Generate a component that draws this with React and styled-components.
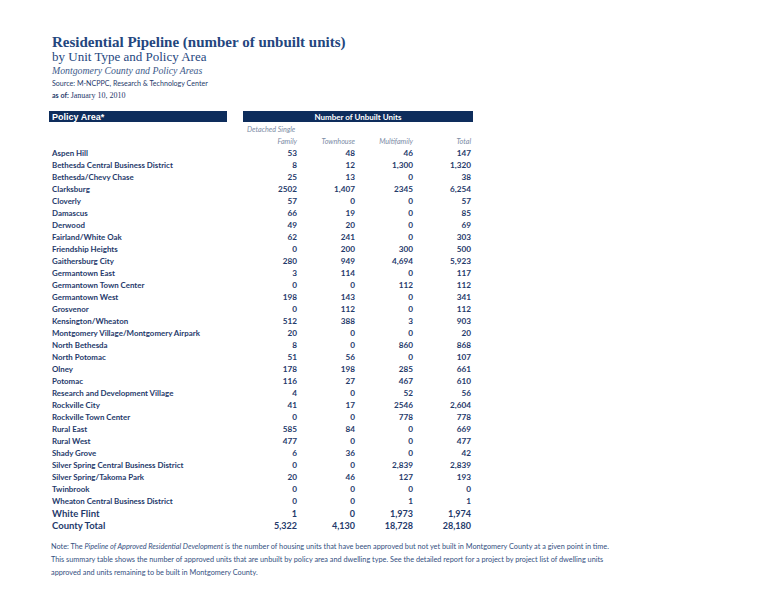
import React from 'react';
import styled, { createGlobalStyle } from 'styled-components';

const navy = '#0e2d5c';
const ink = '#1f3a6b';
const muted = '#7b8ba5';

const GlobalStyle = createGlobalStyle`
body {
    margin: 0;
    background: #ffffff;
}
`

const Page = styled.div`
width: 768px;
height: 594px;
padding: 34px 0 0 49px;
box-sizing: border-box;
color: ${ink};
`

const Title = styled.h1`
margin: 0;
padding-left: 3px;
font-family: "Liberation Serif", serif;
font-weight: 700;
font-size: 15px;
line-height: 16px;
color: #24467e;
`

const Subtitle = styled.h2`
margin: 0;
padding-left: 3px;
font-family: "Liberation Serif", serif;
font-weight: 400;
font-size: 13px;
line-height: 14px;
color: #24467e;
`

const Region = styled.div`
padding-left: 3px;
font-family: "Liberation Serif", serif;
font-style: italic;
font-size: 9.8px;
line-height: 13px;
color: #3d5a8a;
`

const Meta = styled.div`
padding-left: 3px;
font-family: "Lato", sans-serif;
font-size: 7.1px;
line-height: ${props => props.tall ? '13px' : '12px'};
color: ${ink};
b {
    font-weight: 700;
}
span {
    font-family: "Liberation Serif", serif;
    font-size: 8px;
}
`

const Table = styled.div`
margin-top: 9px;
display: grid;
grid-template-columns: 194px 56px 58px 58px 58px;
grid-auto-rows: 12px;
font-family: "Lato", sans-serif;
`

const Bar = styled.div`
background: ${navy};
color: #ffffff;
font-weight: 700;
height: 11px;
display: flex;
align-items: center;
grid-column: ${props => props.span};
margin-right: ${props => props.gap || '0'};
justify-content: ${props => props.center ? 'center' : 'flex-start'};
padding-left: ${props => props.center ? '0' : '3px'};
font-family: ${props => props.center ? '"Lato", sans-serif' : '"Liberation Sans", sans-serif'};
font-size: ${props => props.center ? '8px' : '9px'};
`

const ColHead = styled.div`
font-style: italic;
font-size: 7.2px;
color: ${muted};
display: flex;
align-items: center;
justify-content: ${props => props.left ? 'flex-start' : 'flex-end'};
padding-left: ${props => props.left ? '4px' : '0'};
padding-right: 2px;
white-space: nowrap;
`

const Name = styled.div`
padding-left: 3px;
display: flex;
align-items: center;
font-weight: 700;
font-size: ${props => props.big ? '9.5px' : '7.9px'};
color: ${ink};
white-space: nowrap;
`

const Num = styled.div`
display: flex;
align-items: center;
justify-content: flex-end;
padding-right: 2px;
font-weight: 700;
font-size: ${props => props.big ? '9px' : '8.2px'};
color: ${ink};
`

const Note = styled.div`
margin-top: 9px;
padding-left: 2px;
font-family: "Lato", sans-serif;
font-size: 7.3px;
line-height: 13px;
color: #34507f;
white-space: nowrap;
i {
    font-style: italic;
}
`

const rows = [
    ['Aspen Hill', '53', '48', '46', '147'],
    ['Bethesda Central Business District', '8', '12', '1,300', '1,320'],
    ['Bethesda/Chevy Chase', '25', '13', '0', '38'],
    ['Clarksburg', '2502', '1,407', '2345', '6,254'],
    ['Cloverly', '57', '0', '0', '57'],
    ['Damascus', '66', '19', '0', '85'],
    ['Derwood', '49', '20', '0', '69'],
    ['Fairland/White Oak', '62', '241', '0', '303'],
    ['Friendship Heights', '0', '200', '300', '500'],
    ['Gaithersburg City', '280', '949', '4,694', '5,923'],
    ['Germantown East', '3', '114', '0', '117'],
    ['Germantown Town Center', '0', '0', '112', '112'],
    ['Germantown West', '198', '143', '0', '341'],
    ['Grosvenor', '0', '112', '0', '112'],
    ['Kensington/Wheaton', '512', '388', '3', '903'],
    ['Montgomery Village/Montgomery Airpark', '20', '0', '0', '20'],
    ['North Bethesda', '8', '0', '860', '868'],
    ['North Potomac', '51', '56', '0', '107'],
    ['Olney', '178', '198', '285', '661'],
    ['Potomac', '116', '27', '467', '610'],
    ['Research and Development Village', '4', '0', '52', '56'],
    ['Rockville City', '41', '17', '2546', '2,604'],
    ['Rockville Town Center', '0', '0', '778', '778'],
    ['Rural East', '585', '84', '0', '669'],
    ['Rural West', '477', '0', '0', '477'],
    ['Shady Grove', '6', '36', '0', '42'],
    ['Silver Spring Central Business District', '0', '0', '2,839', '2,839'],
    ['Silver Spring/Takoma Park', '20', '46', '127', '193'],
    ['Twinbrook', '0', '0', '0', '0'],
    ['Wheaton Central Business District', '0', '0', '1', '1'],
    ['White Flint', '1', '0', '1,973', '1,974', true],
    ['County Total', '5,322', '4,130', '18,728', '28,180', true],
];

export default function App() {
    return <Page>
        <GlobalStyle />
        <Title>Residential Pipeline (number of unbuilt units)</Title>
        <Subtitle>by Unit Type and Policy Area</Subtitle>
        <Region>Montgomery County and Policy Areas</Region>
        <Meta tall>Source: M-NCPPC, Research &amp; Technology Center</Meta>
        <Meta><b>as of:</b> <span>January 10, 2010</span></Meta>
        <Table>
            <Bar span="1 / 2" gap="16px">Policy Area*</Bar>
            <Bar span="2 / 6" center>Number of Unbuilt Units</Bar>
            <div />
            <ColHead left>Detached Single</ColHead>
            <div /><div /><div />
            <div />
            <ColHead>Family</ColHead>
            <ColHead>Townhouse</ColHead>
            <ColHead>Multifamily</ColHead>
            <ColHead>Total</ColHead>
            {rows.map(([name, a, b, c, d, big]) => <React.Fragment key={name}>
                <Name big={big}>{name}</Name>
                <Num big={big}>{a}</Num>
                <Num big={big}>{b}</Num>
                <Num big={big}>{c}</Num>
                <Num big={big}>{d}</Num>
            </React.Fragment>)}
        </Table>
        <Note>
            <div>Note: The <i>Pipeline of Approved Residential Development</i> is the number of housing units that have been approved but not yet built in Montgomery County at a given point in time.</div>
            <div>This summary table shows the number of approved units that are unbuilt by policy area and dwelling type. See the detailed report for a project by project list of dwelling units</div>
            <div>approved and units remaining to be built in Montgomery County.</div>
        </Note>
    </Page>
}
